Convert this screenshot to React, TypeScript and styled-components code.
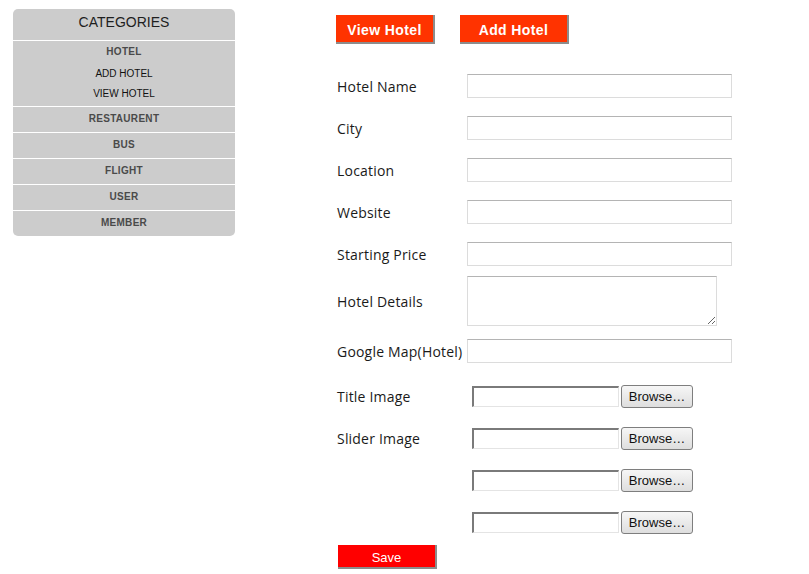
import React from 'react';
import styled, { createGlobalStyle } from 'styled-components';

const GlobalStyle = createGlobalStyle`
  body {
    margin: 0;
    background: #fff;
    font-family: 'Liberation Sans', Arial, sans-serif;
  }
`;

const Page = styled.div`
  display: flex;
  flex-direction: row;
  align-items: flex-start;
  padding: 9px 0 0 13px;
`;

const Sidebar = styled.div`
  width: 222px;
  background: #cccccc;
  border-radius: 5px;
  overflow: hidden;
`;

const SidebarTitle = styled.div`
  padding: 4px 0 9px;
  line-height: 18px;
  font-size: 14px;
  color: #1e1e1e;
  text-align: center;
`;

const Section = styled.div`
  border-top: 1px solid #ffffff;
  padding: 1px 0 2px;
  text-align: center;
`;

const SectionHead = styled.div`
  line-height: 20px;
  font-size: 10px;
  font-weight: bold;
  color: #4a4a4a;
  letter-spacing: 0.3px;
`;

const SubItem = styled.div<{ $first?: boolean }>`
  margin-top: ${(p) => (p.$first ? '2px' : '0')};
  line-height: 20px;
  font-size: 10px;
  color: #111;
`;

const MenuRow = styled.div`
  border-top: 1px solid #ffffff;
  padding: 3px 0 5px;
  line-height: 17px;
  font-size: 10px;
  font-weight: bold;
  color: #4a4a4a;
  letter-spacing: 0.3px;
  text-align: center;
`;

const Main = styled.div`
  margin-left: 101px;
  margin-top: 6px;
  display: flex;
  flex-direction: column;
`;

const TopButtons = styled.div`
  display: flex;
  flex-direction: row;
  gap: 25px;
`;

const TabButton = styled.div<{ $width: number }>`
  width: ${(p) => p.$width - 2}px;
  height: 27px;
  background: #ff3300;
  border-right: 2px solid #8c8c8c;
  border-bottom: 2px solid #8c8c8c;
  color: #fff;
  font-size: 14px;
  font-weight: bold;
  letter-spacing: 0.4px;
  line-height: 30px;
  text-align: center;
`;

const Form = styled.div`
  margin-top: 30px;
  display: flex;
  flex-direction: column;
`;

const Row = styled.div<{ $gap: number }>`
  display: flex;
  flex-direction: row;
  align-items: center;
  margin-top: ${(p) => p.$gap}px;
`;

const Label = styled.div`
  width: 130px;
  padding-left: 1px;
  flex-shrink: 0;
  font-family: 'Open Sans', sans-serif;
  font-size: 14px;
  letter-spacing: 0.2px;
  color: #1a1a1a;
  white-space: nowrap;
`;

const TextInput = styled.input`
  box-sizing: border-box;
  width: 265px;
  height: 24px;
  margin: 0;
  border: 1px solid #dcdcdc;
  border-top-color: #b4b4b4;
  background: #fff;
  outline: none;
`;

const TextArea = styled.textarea`
  box-sizing: border-box;
  width: 250px;
  height: 50px;
  margin: 0;
  border: 1px solid #dcdcdc;
  border-top-color: #b4b4b4;
  background: #fff;
  outline: none;
`;

const FileControl = styled.div`
  display: flex;
  flex-direction: row;
  align-items: center;
  margin-left: 5px;
  gap: 2px;
`;

const FileBox = styled.div`
  box-sizing: border-box;
  width: 147px;
  height: 21px;
  border-top: 2px solid #7a7a7a;
  border-left: 2px solid #7a7a7a;
  border-right: 1px solid #e4e4e4;
  border-bottom: 1px solid #e4e4e4;
  background: #fff;
`;

const BrowseButton = styled.div`
  box-sizing: border-box;
  width: 72px;
  height: 23px;
  border: 1px solid #7e7e7e;
  border-radius: 3px;
  background: linear-gradient(#f6f6f6, #dedede);
  font-size: 13px;
  color: #111;
  line-height: 22px;
  text-align: center;
`;

const SaveButton = styled.div`
  margin-top: 11px;
  margin-left: 2px;
  width: 97px;
  height: 22px;
  background: #ff0000;
  border-right: 2px solid #8c8c8c;
  border-bottom: 2px solid #8c8c8c;
  color: #fff;
  font-size: 13px;
  line-height: 26px;
  text-align: center;
`;

const textFields: { label: string; gap: number }[] = [
  { label: 'Hotel Name', gap: 0 },
  { label: 'City', gap: 18 },
  { label: 'Location', gap: 18 },
  { label: 'Website', gap: 18 },
  { label: 'Starting Price', gap: 18 },
];

const fileFields: { label: string; gap: number }[] = [
  { label: 'Title Image', gap: 22 },
  { label: 'Slider Image', gap: 19 },
  { label: '', gap: 19 },
  { label: '', gap: 19 },
];

const App = () => {
  return (
    <>
      <GlobalStyle />
      <Page>
        <Sidebar>
          <SidebarTitle>CATEGORIES</SidebarTitle>
          <Section>
            <SectionHead>HOTEL</SectionHead>
            <SubItem $first>ADD HOTEL</SubItem>
            <SubItem>VIEW HOTEL</SubItem>
          </Section>
          <MenuRow>RESTAURENT</MenuRow>
          <MenuRow>BUS</MenuRow>
          <MenuRow>FLIGHT</MenuRow>
          <MenuRow>USER</MenuRow>
          <MenuRow>MEMBER</MenuRow>
        </Sidebar>
        <Main>
          <TopButtons>
            <TabButton $width={99}>View Hotel</TabButton>
            <TabButton $width={109}>Add Hotel</TabButton>
          </TopButtons>
          <Form>
            {textFields.map((f) => (
              <Row key={f.label} $gap={f.gap}>
                <Label>{f.label}</Label>
                <TextInput type="text" />
              </Row>
            ))}
            <Row $gap={10}>
              <Label>Hotel Details</Label>
              <TextArea />
            </Row>
            <Row $gap={13}>
              <Label>Google Map(Hotel)</Label>
              <TextInput type="text" />
            </Row>
            {fileFields.map((f, i) => (
              <Row key={i} $gap={f.gap}>
                <Label>{f.label}</Label>
                <FileControl>
                  <FileBox />
                  <BrowseButton>Browse…</BrowseButton>
                </FileControl>
              </Row>
            ))}
            <SaveButton>Save</SaveButton>
          </Form>
        </Main>
      </Page>
    </>
  );
};

export default App;
